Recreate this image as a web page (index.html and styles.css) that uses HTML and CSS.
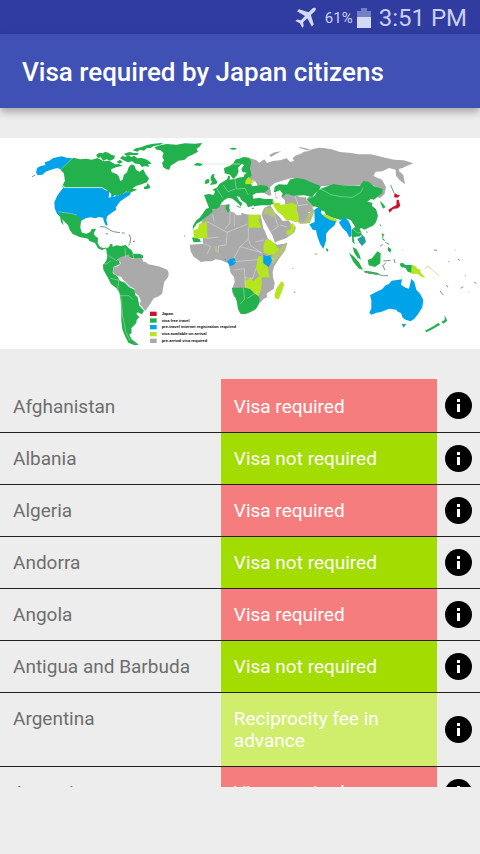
FILE: index.html
```html
<!DOCTYPE html>
<html lang="en">

<head>
  <meta charset="UTF-8" />
  <meta name="viewport" content="width=device-width, initial-scale=1.0" />
  <title>Visa required by Japan citizens</title>

  <link rel="stylesheet" href="styles.css">
</head>

<body>
  <div class="status-bar">
    <svg class="plane" viewBox="0 0 22 22" aria-label="Airplane mode">
      <path d="M20.600 1.200c-1.200-.8-2.700-.2-3.700.8L13.500 5.300 4 2.300 2 4.300l8 4.700-4 4.200-4-.7-1.500 1.500 4.400 2.300 2.300 4.500 1.500-1.500-.6-4 4.200-4 4.500 8.200 2-2-2.900-9.600 3.600-3.500c1-1 1.800-2.300 1.100-3.200z" />
    </svg>
    <span class="percent">61%</span>
    <svg class="battery" viewBox="0 0 14 22" aria-label="Battery">
      <path class="battery-empty" d="M4 1h6v3h4v6H0V4h4z" />
      <path d="M0 10h14v11H0z" />
    </svg>
    <span class="time">3:51 PM</span>
  </div>

  <header class="app-bar">
    <h1>Visa required by Japan citizens</h1>
  </header>

  <svg class="map" viewBox="0 0 1440 633" role="img" aria-label="World map of visa requirements">
    <!-- Americas -->
    <g transform="translate(0 -9)">
      <g class="online">
        <path d="M108 112l4-14 10-5 14-3-2-8 14-5 12-8 25-5 18 5 17 1-35 35-12-6-10 2-14 5-12 4-10 9-14 2z" />
        <path d="M180 170l10-12h115l12 7 11 4-2 20 7-3 2-13 9 5-4 8 20-7 15-8 10 1 9-3-4 10-15 10-14 10-7 9-7 10 2 6-16 11-11 8-3 12 4 15-5 2-6-12-3-12-11-2-13 4-12-3-14 2-15 8-4 12-9-7-6-9-10-4-14 1-21-5-9-9-7-16-1-18 8-18z" />
      </g>
      <g class="free">
        <path d="M220 68L240 73 260 71 275 74 293 69 311 79 327 77 345 88 357 87 368 93 350 96 333 103 335 112 350 117 357 125 361 139 369 133 371 120 381 112 386 97 395 88 404 92 408 104 418 110 430 103 437 118 447 130 441 142 425 148 410 152 397 160 412 164 395 171 385 170 368 176 350 183 334 178 322 166 305 157H195L188 150 195 137 191 114 181 104z" />
        <path d="M288 60L298 53 308 55 316 50 326 54 334 59 345 62 342 72 330 77 320 73 310 77 302 67 294 69z" />
        <path d="M360 70L368 62 376 66 385 60 394 66 403 62 412 70 424 69 436 72 447 78 455 86 444 88 448 96 436 93 426 96 418 87 406 86 396 79 384 82 373 77zM350 80l10-6 8 8-10 4z" />
        <path d="M398 46L408 40 425 36 440 30 460 26 492 23 478 30 460 34 452 39 440 40 432 47 420 44 412 50zM372 56l16-5 14 3 14 0-4 6-18 0-16 2z" />
        <path d="M432 156l8-4 3-8 9 13-8 5-12 0zM184 150l9 8-2 3z" />
        <path d="M463 37L480 31 500 27 530 29 555 25 585 26 606 24 600 34 590 41 594 50 580 58 562 66 553 75 535 77 522 86 512 92 508 104 499 103 490 97 486 84 492 76 487 65 491 54 481 46 470 44z" />
        <path d="M178 231l14 2 32 5 19 13-2 28 5 14 13 3 12-5 4-9 13-1-7 15 5 8 8 5-1 15 7 12 12 4 7-3-2 4-12 4-11-5-9-16-17-6-4-7-25-5-21-9-9-13-5-14-15-14-6-12zM178 233l6 8 7 30-8-10z" />
        <path d="M318 340l9-4 4-9 6 0 1 8 12-4 12 2 15-3 9 9 9 7 5 10 16 0 12 4 2 9-23 2-21-4-31 6 5 14-20 9-2 18 15 11 7 12 15 6 12 13 19 10-1 13 8 8 5 25 14 15-6 11-13-6-4 5 9 9-8 9-1 9-8 8-7 8 1 13-7 6 7 14 8 6 13 10-12 2-19-8-10-20-8-20-3-25 0-30-2-30-4-25-9-14-16-12-9-18-14-25-1-15 9-10 4-12z" />
      </g>
      <path class="required" d="M350 373l15-8 10-3 12-4 2 10 14 3 23-3 4 12 8 2 7 6 13 2 22 5 22 9 4 9-1 12-12 15-4 20-2 15-10 9-16 6-9 15-9 13-8 10-8-11-9-10 5-8-7-17-13-10 1-10-15-8-11-12-8-7-7-10-14-3-10-10 1-16 14-2 9-10z" />
      <path class="islands" d="M300 275l15 1 24 14M340 290l20 3M317 296l7 1M366 294l8 0M387 298l5 12-2 14-4 8M405 318l-6 2M96 125l10-5M400 624l14 4" />
      <path class="border" d="M220 68l-39 36M190 158h115l14 8M370 176l12-8M175 230l40 6 15 4M304 385l16 2 12-10M322 360l30 18M332 430l25 6M357 432l-4 28 6 22h28l12 12M362 482l6 60 10 50 12 25M375 340l2 28M398 354l3 15" />
    </g>

    <!-- Europe, Africa and western Asia -->
    <g transform="translate(540 -9)">
      <g class="required">
        <path d="M210 70l18 5 10 8 15-10 8 11 17-6 22-2 20-6 10 10 12-2-4-10 12-8 12-3 10-7 14-2 12-6 20-4 17 2 20 3 25 8 33 3 22 4 36 0 24 5 20 5 28 6 28 2 29 9-20 8-12 6-10 2-1 7 13 12 5 28-16-12-11-14-1-18-20-5-20 10-20 1-7 13 26 11 12 22-4 21-15 13-11-8 10-20-24-14-16-6-12 8-30 2-48-1-45 3-20-5-30-13-38-7-24 7-26 8-15 12 4 24-7 2-16-9-20-12 2-10-8-13-27-5-5-13 8-10-2-18z" />
        <path d="M286 166l14 5 10 14-5 10-18-6zM315 176l28 3 20 8 15 0 2 10 19 2-4 13 6 15-16 5 8 18-10 12-28 1-3-30-15-26-20 3-20-12z" />
        <path d="M245 236l8-18 18-8 12 22 14 12 11 14 18-2 9 13 13 8-5 15-23 17-27 10-8 4-8-22-16-28-13-25z" />
        <path d="M75 232l15-10 22-10 17-3 20-1 0 20 14 5 7 8 14-1 0-7 22 6 36 1 5 25 3 15 6 11 7 19 13 12 16 7 20-3 10-3-6 22-18 25-16 25-4 16 1 15 5 18-3 18-11 7-10 7 1 11-11 6-9 10-37-10-43-8-6-18 9-26-2-15-10-12-4-17-3-12-11-5-11-4-16-3-12 6-18 0-14 2-11-8-11-8-9-16-3-20 40-3 0-50-5-10z" />
      </g>
      <g class="free">
        <path d="M72 180l14-3 15 3 4-11-8-5 15-7 6-10 16-10 8-5 2-10 6 2-1 10 14-2 18-5 25-1 4 14 7 14 26-4 18 3 6 10-16 10-13 0-8 5 2 9-11 9-3 17-14 4-6-12-12-8-8-12-8-1 8 13 9 8-5 10-5-7-10-9-10-8-12-3-13 8-8 8-6 13-10 5-20-1z" />
        <path d="M132 99L150 92 160 84 168 73 178 71 190 66 208 68 214 82 210 100 215 122 203 134 189 130 194 118 203 113 188 112 184 102 192 90 186 86 174 98 176 110 170 122 160 132 150 119 134 115z" />
        <path d="M95 119l9-3-2 9 10 15-3 7-20 3 7-9-5-10zM76 136l8-5 5 5-3 9-12 2zM40 91l11-8 18 4-8 6zM147 41l10-3 14 1-9 6z" />
        <path d="M213 196l22-8 19 4 24 0 4 14-14 5-23 0-23 3-8-10z" />
        <path d="M284 155l12-7 25 1 10-16 20-4 22 4 18 8 14 5 18 8-6 12-10 8-10 11-26-4-31 1-22-6-9 9-13-3-4-11-10 0z" />
        <path d="M70 233l8-12 17-4 3 13-10 9-14 10-10 9-14 8-12 18 1-12 9-15 11-9zM137 211l11-3-2 11 4 7-6 7-7-12zM36 309l8-4 15 8 4 8-22 1z" />
        <path d="M155 458l42 0 14 5 12 12 12 8 4 10-1 12-10 17-17 10-16 6-14-2-7-14-4-24-8-20z" />
      </g>
      <g class="arrival">
        <path d="M40 286l14-5 3-14 24-8 1 51-40 0zM205 238l15 3 18-3 4 11-7 5 10 24-40 0z" />
        <path d="M276 195l8 9 18-1 18 4 16-4 15 8-1 18 6 15 2 17-16-1-13-5-11 0-12-15-12-8-12-17z" />
        <path d="M318 290l15-9-2-12 6-5 10 13-10 17-13 9zM196 138l9-13 9 10 8 8-12 4-14 1z" />
        <path d="M256 313l15 2 12 10 8 12 8 4-12 16-21 4-15-9-1-17zM234 366l13-5 2 24 16 12 0 15 4 16-14-2-16 4-4-14-7-16zM195 437l18-8 7 10 14-14 10 4 2 13-3 23-7 19-13-9-11-12-16-6z" />
        <path d="M284 490l0-12 5-17 14-21 7 0 2 10-7 21-9 22z" />
      </g>
      <path class="mixed" d="M248 240l8-20 20-2 14 24-12 4-16-8zM355 262l17-1 15-26 12-13 6 4-10 25-6 14-28 2zM299 341l19-17-4 24-24 25-12 18-5-26zM104 335l6-3 2 20-8 0zM376 190l18 4 12 15-7 10-9-12z" />
      <path class="online" d="M250 360l9 3 15-2 1 18-9 17-16-12zM142 379l9-8 12-2 5 12-6 8-12 5zM134 372l4 2-3 3z" />
      <path class="water" d="M288 170l12-4 8 10-4 10 11 10 0 12-14 2-5-14-8-12zM218 180l14-7 22 8 6 9-22-3-18 4z" />
      <path class="border" d="M81 260l60 32 62-25M98 237l4 22M150 230v34l-15 18M163 238v36M205 278v35l-25 22-18 35M142 292l-4 38-22 3-2 22M81 310l35-4M60 322l32 12-10 22M205 313l8 20 34 22M180 335l65 18M160 380l75-6M163 405l30-4 3 58M228 400l-10 30-24-2M190 458l4 34-14 16M202 490l30-18M110 160l18 28M130 150l14 20 22-8M165 132l4 30 26-2M195 160l10 20M285 245l10 30-22 14M300 270l22 6M252 315l-26 6M270 362l10 12M345 182l10 30 28-4" />
      <path class="islands" d="M338 400l2 2M342 471l4 1M12 302l3 2M215 220l7 0M170 213l12 5M404 357l7 0" />
      <path class="frame" d="M68 87h112M180 45v24" />
      <path class="required" d="M268 60l16-8 20-3-16 8-15 9zM358 36l20 4 22 7-20-2-22-6z" />
    </g>

    <!-- Eastern Asia and Oceania -->
    <g transform="translate(900 -9)">
      <g class="free">
        <path d="M20 192l10-8 14-1 8-14 10-8 16-6 22-8 18 3 28 2 34 0 10-14 16 2 16 14 26 8-2 13-14 11-10 8-10-2-10 8 15 3-1 10 12 9 6 20-6 20-9 10-14 6-11 6-10-5-12 7-10-16-10-15-16-5-14 5-28-8-16-8-5-10-16-4-4-8-14-4z" />
        <path d="M155 284l10-8 14 6 6 12-4 10-12 1-8 2 3 21-7-8zM158 336l11 6 9 16 5 16-10-6-10-14zM147 354l12 8 18 20 12 22-12-3-17-20zM188 407l20 2 28 5-2 5-28-3zM203 375l13-5 16-21 10 6-1 30-16 11-19-5zM299 386l9-3 8 7 20 0-1 24-12-4-6-11-14-3zM246 294l6 4-3 12 8 8-9-3zM264 335l10 8-3 10-8-7zM239 198l8 6 10 12-8 5zM79 338l6 6-2 6-5-4zM375 587l25-13 15-10 6 5-24 14-18 9zM424 560l10-5 0-14 8 16-12 9z" />
      </g>
      <g class="online">
        <path d="M43 226l8-8 12 5 1 14 14 8 18 8 14 2-6 16-16 13-10 13 0 20-8 25-10-16-8-22-4-18-10-2-10-16 16-7zM117 263l10-12 8-4 12 13 7 17 1 26-7 4-8-16-12-11z" />
        <path d="M210 481l18-10 18-8 11-12 10-4 8-10 16-2 15-2-3 16 14 9 10 3 7-30 9 10 6 23 12 14 9 17-3 22-14 22-10 12-11 8-15-5-9-6-5-14-10-4-4-6-22-3-24 10-13 2-16 6-6-6 6-13 0-24z" />
      </g>
      <path class="teal" d="M172 312l13-8-4-10 13 13 4 14-12 12-8-10zM305 568l14-2-8 12z" />
      <path class="arrival" d="M70 236l14 6 24 10 4 8-22-5-20-12zM335 390l10 2 8 10 10 2-3 6 16 18-12-3-12-9-17 1z" />
      <path class="japan" d="M284 174l8 5 8 2-7 7-11-1zM290 194l6 0 5 18-7 8-15 2-10 11-4-9 14-9 10-5z" />
      <path class="islands" d="M194 412l38 6 18 4 14 0M250 378l22-2M248 390l7 16M258 383l-8 8M282 372l3 12M240 268l3 6M198 290l5 2M240 334l8-6M256 322l12 6M402 345l9 1M445 380l3 1M474 373l5 2M440 450l3 7M420 468l10 12M482 460l8-5M523 442l6 3M494 422l3 1M272 150l10 24" />
      <path class="specks" d="M374 400l10-6 12 10 20 18M306 344l4 1M462 345l6 1M45 357l8 0M505 471l5 1" />
      <path class="border" d="M60 162l12 5 20 12 30 6 35 2 25-15 8-14M20 192l22-8M160 282l12 12 12-2M60 156l20-2" />
    </g>

    <!-- Legend -->
    <g class="legend">
      <rect class="japan" x="450" y="521" width="20" height="13" />
      <rect class="free" x="450" y="541" width="20" height="13" />
      <rect class="online" x="450" y="561" width="20" height="13" />
      <rect class="arrival" x="450" y="582" width="20" height="13" />
      <rect class="required" x="450" y="602" width="20" height="13" />
      <text x="485" y="531">Japan</text>
      <text x="485" y="551">visa free travel</text>
      <text x="485" y="571">pre-travel internet registration required</text>
      <text x="485" y="592">visa available on arrival</text>
      <text x="485" y="612">pre-arrival visa required</text>
    </g>
  </svg>

  <svg class="symbols" aria-hidden="true">
    <symbol id="info" viewBox="0 0 27 27">
      <circle cx="13.500" cy="13.500" r="13.500" />
      <path fill="#fff" d="M12 7h3v3h-3zM12 12h3v8h-3z" />
    </symbol>
  </svg>

  <main class="list">
    <table>
      <tr>
        <th scope="row">Afghanistan</th>
        <td class="visa-required">Visa required</td>
        <td class="info"><button aria-label="About Afghanistan"><svg><use href="#info" /></svg></button></td>
      </tr>
      <tr>
        <th scope="row">Albania</th>
        <td class="visa-free">Visa not required</td>
        <td class="info"><button aria-label="About Albania"><svg><use href="#info" /></svg></button></td>
      </tr>
      <tr>
        <th scope="row">Algeria</th>
        <td class="visa-required">Visa required</td>
        <td class="info"><button aria-label="About Algeria"><svg><use href="#info" /></svg></button></td>
      </tr>
      <tr>
        <th scope="row">Andorra</th>
        <td class="visa-free">Visa not required</td>
        <td class="info"><button aria-label="About Andorra"><svg><use href="#info" /></svg></button></td>
      </tr>
      <tr>
        <th scope="row">Angola</th>
        <td class="visa-required">Visa required</td>
        <td class="info"><button aria-label="About Angola"><svg><use href="#info" /></svg></button></td>
      </tr>
      <tr>
        <th scope="row">Antigua and Barbuda</th>
        <td class="visa-free">Visa not required</td>
        <td class="info"><button aria-label="About Antigua and Barbuda"><svg><use href="#info" /></svg></button></td>
      </tr>
      <tr>
        <th scope="row">Argentina</th>
        <td class="visa-fee">Reciprocity fee in advance</td>
        <td class="info"><button aria-label="About Argentina"><svg><use href="#info" /></svg></button></td>
      </tr>
      <tr>
        <th scope="row">Armenia</th>
        <td class="visa-required">Visa required</td>
        <td class="info"><button aria-label="About Armenia"><svg><use href="#info" /></svg></button></td>
      </tr>
    </table>
  </main>
</body>

</html>
```
FILE: styles.css
```css
* {
  box-sizing: border-box;
}

body {
  margin: 0;
  height: 100vh;
  padding-bottom: 67px;
  display: flex;
  flex-direction: column;
  font-family: Roboto, sans-serif;
  background-color: #ededed;
}

/* bars */
.status-bar {
  flex: none;
  height: 34px;
  padding: 2px 13px 0;
  display: flex;
  align-items: center;
  justify-content: flex-end;
  background-color: #303c9f;
  color: #c9d0f5;
  fill: #d3daf8;
}

.plane {
  width: 22px;
  height: 22px;
  margin-right: 8px;
}

.percent {
  font-size: 15px;
}

.battery {
  width: 14px;
  height: 22px;
  margin: 0 8px 0 4px;
}

.battery-empty {
  fill: #7580c4;
}

.time {
  font-size: 24px;
  line-height: 32px;
}

.app-bar {
  flex: none;
  height: 74px;
  padding: 2px 22px 0;
  display: flex;
  align-items: center;
  background-color: #3f51b5;
  box-shadow: 0 4px 8px rgba(0, 0, 0, 0.3);
}

h1 {
  margin: 0;
  font-size: 26px;
  font-weight: 500;
  line-height: 32px;
  color: #fff;
}

/* map */
.map {
  flex: none;
  width: 100%;
  margin: 30px 0;
  background-color: #fff;
}

.free {
  fill: #22b14c;
}

.online {
  fill: #00a2e8;
}

.arrival {
  fill: #b5e61d;
}

.required {
  fill: #aaa;
}

.mixed {
  fill: #b5c377;
}

.teal {
  fill: #22a09a;
}

.japan {
  fill: #c8142d;
}

.water {
  fill: #fff;
}

.border {
  fill: none;
  stroke: #fff;
  stroke-opacity: 0.5;
  stroke-width: 2;
}

.islands {
  fill: none;
  stroke: #6f9a80;
  stroke-width: 3;
}

.frame {
  fill: none;
  stroke: #cde3d3;
  stroke-width: 2;
}

.specks {
  fill: none;
  stroke: #dbe29a;
  stroke-width: 3;
}

.legend text {
  font-family: "Liberation Sans", sans-serif;
  font-size: 12px;
  font-weight: 700;
}

.symbols {
  display: none;
}

/* countries */
.list {
  flex: 1;
  min-height: 0;
  overflow-y: auto;
  scrollbar-width: none;
}

table {
  width: 100%;
  table-layout: fixed;
  border-spacing: 0;
}

th,
td {
  padding: 15px 13px 14px;
  border-bottom: 1px solid #222;
  font-size: 19px;
  font-weight: 400;
  line-height: 22px;
  text-align: left;
  vertical-align: top;
}

tr:first-child > :not(.info) {
  padding-top: 17px;
}

th {
  width: 46%;
  color: #6e6e6e;
}

td {
  width: 45%;
  color: #fff;
}

.visa-required {
  background-color: #f67d7d;
}

.visa-free {
  background-color: #a3dc00;
}

.visa-fee {
  background-color: #d0ed6c;
}

.info {
  width: 9%;
  padding: 0;
  text-align: center;
  vertical-align: middle;
}

button {
  display: block;
  width: 27px;
  height: 27px;
  margin: 0 auto;
  padding: 0;
  border: 0;
  background: none;
}

button svg {
  display: block;
  width: 27px;
  height: 27px;
}
```
